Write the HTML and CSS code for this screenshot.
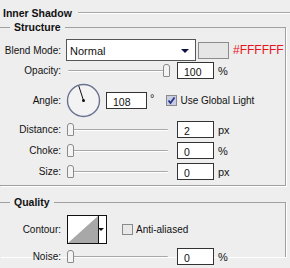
FILE: index.html
```html
<!DOCTYPE html>
<html lang="en">
<head>
    <meta charset="UTF-8">
    <title>Inner Shadow</title>
    <link rel="stylesheet" href="styles.css">
</head>
<body>
    <div class="title">Inner Shadow</div>

    <fieldset class="group">
        <legend>Structure</legend>

        <div class="row blend">
            <span class="lbl">Blend Mode:</span>
            <div class="select">Normal<span class="arrow"></span></div>
            <div class="swatch"></div>
            <span class="hex">#FFFFFF</span>
        </div>

        <div class="row opacity">
            <span class="lbl">Opacity:</span>
            <div class="slider"><span class="thumb" style="left: 97px;"></span></div>
            <div class="field">100</div>
            <span class="unit">%</span>
        </div>

        <div class="row angle">
            <span class="lbl">Angle:</span>
            <svg class="dial" width="35" height="35" viewBox="0 0 35 35">
                <circle cx="17.5" cy="17.5" r="16" fill="#f3f3f3" stroke="#6b7290" stroke-width="1.4"/>
                <line x1="17.5" y1="17.5" x2="12.8" y2="3" stroke="#111" stroke-width="1"/>
                <circle cx="17.5" cy="17.5" r="1.5" fill="#111"/>
            </svg>
            <div class="field wide">108</div>
            <span class="deg">°</span>
            <span class="check on">
                <svg width="11" height="11" viewBox="0 0 11 11"><path d="M2.5 5.5 L4.5 8 L8.5 2.5" fill="none" stroke="#27338a" stroke-width="1.8"/></svg>
            </span>
            <span class="check-lbl">Use Global Light</span>
        </div>

        <div class="row distance">
            <span class="lbl">Distance:</span>
            <div class="slider"><span class="thumb" style="left: 1px;"></span></div>
            <div class="field">2</div>
            <span class="unit">px</span>
        </div>

        <div class="row">
            <span class="lbl">Choke:</span>
            <div class="slider"><span class="thumb" style="left: 1px;"></span></div>
            <div class="field">0</div>
            <span class="unit">%</span>
        </div>

        <div class="row">
            <span class="lbl">Size:</span>
            <div class="slider"><span class="thumb" style="left: 1px;"></span></div>
            <div class="field">0</div>
            <span class="unit">px</span>
        </div>
    </fieldset>

    <fieldset class="group quality">
        <legend>Quality</legend>

        <div class="row contour-row">
            <span class="lbl">Contour:</span>
            <div class="contour">
                <svg width="30" height="27" viewBox="0 0 30 27"><polygon points="0,27 30,0 30,27" fill="#a8a8a8"/></svg>
                <span class="arrow small"></span>
            </div>
            <span class="check"></span>
            <span class="check-lbl">Anti-aliased</span>
        </div>

        <div class="row noise">
            <span class="lbl">Noise:</span>
            <div class="slider"><span class="thumb" style="left: 1px;"></span></div>
            <div class="field">0</div>
            <span class="unit">%</span>
        </div>
    </fieldset>
</body>
</html>
```

FILE: styles.css
```css
body {
    margin: 0;
    height: 268px;
    background: #eeeeee;
    font-family: 'Liberation Sans', Arial, sans-serif;
    font-size: 10px;
    color: #111;
    overflow: hidden;
}
.title {
    display: flex;
    align-items: center;
    gap: 6px;
    padding: 5px 0 0 3px;
    height: 15px;
    font-size: 10.5px;
    font-weight: bold;
}
.title::after {
    content: "";
    flex-grow: 1;
    border-top: 1px solid #a6a6a6;
    border-bottom: 1px solid #fff;
}
.group {
    margin: 0 4px 0 0;
    padding: 5px 0 5px;
    border: 1px solid #a0a0a0;
    border-left: none;
    box-shadow: 1px 1px 0 #fff;
}
.group legend {
    margin-left: 10px;
    padding: 0 4px;
    line-height: 14px;
    font-size: 10.5px;
    font-weight: bold;
}
.quality {
    margin-top: 9px;
    padding-top: 6px;
    border-bottom: none;
    height: 50px;
}
.row {
    display: flex;
    align-items: center;
    height: 17px;
    margin-top: 4px;
}
.blend {
    height: 22px;
    margin-top: 0;
}
.opacity {
    margin-top: 1px;
}
.distance {
    margin-top: 3px;
}
.noise {
    margin-top: 4px;
}
.lbl {
    width: 61px;
    text-align: right;
    margin-right: 5px;
    flex-shrink: 0;
}
.select {
    position: relative;
    box-sizing: border-box;
    width: 130px;
    height: 22px;
    padding: 5px 0 0 3px;
    background: #fff;
    border: 1px solid #555;
    font-size: 11px;
}
.arrow {
    position: absolute;
    right: 6px;
    top: 9px;
    border-left: 4px solid transparent;
    border-right: 4px solid transparent;
    border-top: 4px solid #0c1040;
}
.swatch {
    width: 29px;
    height: 15px;
    margin-left: 2px;
    background: #e6e6e6;
    border: 1px solid #8c8c8c;
}
.hex {
    margin-left: 4px;
    color: #e8141b;
    font-size: 12px;
}
.slider {
    position: relative;
    width: 106px;
    height: 17px;
    margin-right: 5px;
}
.slider::before {
    content: "";
    position: absolute;
    left: 2px;
    right: 4px;
    top: 8px;
    border-top: 1px solid #a8a8a8;
    border-bottom: 1px solid #fff;
    border-radius: 1px;
}
.thumb {
    position: absolute;
    top: 2px;
    width: 5px;
    height: 11px;
    background: #f4f4f4;
    border: 1px solid #8a8a8a;
    border-radius: 3px 3px 1px 1px;
}
.field {
    box-sizing: border-box;
    width: 37px;
    height: 17px;
    padding: 3px 0 0 6px;
    background: #fff;
    border: 1px solid #333;
    font-size: 10.5px;
}
.field.wide {
    width: 41px;
}
.unit {
    margin-left: 4px;
    font-size: 11px;
}
.angle {
    height: 35px;
}
.dial {
    flex-shrink: 0;
}
.angle .field {
    margin-left: 5px;
}
.deg {
    align-self: flex-start;
    margin: 9px 6px 0 3px;
    font-size: 11px;
}
.check {
    box-sizing: border-box;
    width: 11px;
    height: 11px;
    border: 1px solid #8a8a8a;
    background: #e8e8e8;
    display: flex;
    align-items: center;
    justify-content: center;
}
.check.on {
    background: #c9cde3;
    margin-left: 6px;
}
.check.on svg {
    flex-shrink: 0;
}
.check-lbl {
    margin-left: 3px;
}
.contour-row {
    height: 29px;
    margin-top: 0;
}
.contour {
    position: relative;
    display: flex;
    box-sizing: border-box;
    width: 40px;
    height: 29px;
    margin-left: 1px;
    background: #fff;
    border: 1px solid #111;
}
.contour svg {
    border-right: 1px solid #111;
}
.arrow.small {
    right: 2px;
    top: 12px;
    border-left-width: 3px;
    border-right-width: 3px;
    border-top: 3px solid #111;
}
.contour-row .check {
    margin-left: 15px;
}
```
